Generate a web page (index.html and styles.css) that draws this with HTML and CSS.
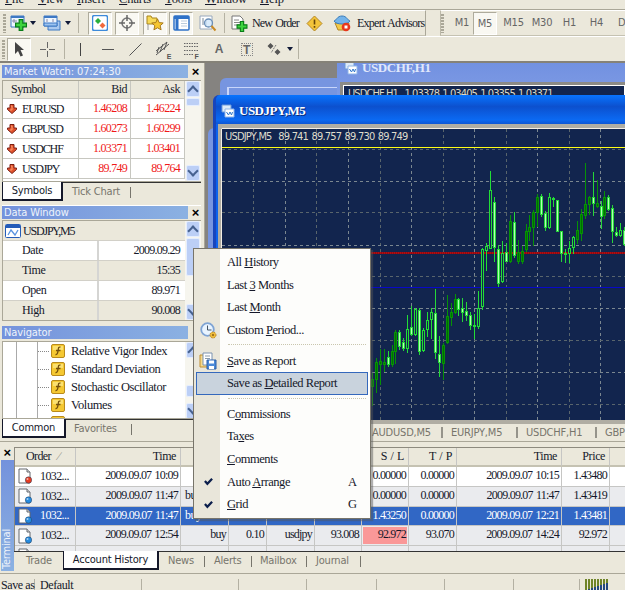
FILE: index.html
```html
<!DOCTYPE html>
<html lang="en">
<head>
<meta charset="utf-8">
<title>Trading terminal</title>
<link rel="stylesheet" href="styles.css">
</head>
<body>
<svg class="defs" width="0" height="0">
  <symbol id="plus" viewBox="0 0 10 10"><path d="M3.5.5h3v3h3v3h-3v3h-3v-3h-3v-3h3z" fill="#3fd43f" stroke="#087c18"/></symbol>
  <symbol id="down" viewBox="0 0 10 10"><path d="M3 .5h4V4h2.500v1.500L5 9.500.5 5.500V4H3z" fill="#e0512b" stroke="#7c2114"/><path d="M4 2h1v4H3" stroke="#ff9c70" fill="none"/></symbol>
  <symbol id="fx" viewBox="0 0 14 14"><rect x=".5" y=".5" width="13" height="13" rx="1.500" fill="#f5c832" stroke="#b98a1c"/><path d="M2 2h10v4H2z" fill="#fbe070"/><path d="M9.500 3.200C7.500 2.500 7.500 4 7.200 6S6.500 11 4.500 10.500M5 6.500h4.500" fill="none" stroke="#75500c" stroke-width="1.300"/></symbol>
  <symbol id="doc" viewBox="0 0 15 16"><path d="M1 1h8l3 3v11H1z" fill="#fff" stroke="#65696e"/><path d="M9 1v3h3" fill="#ddd" stroke="#65696e"/><circle cx="10.500" cy="12" r="3.200" fill="currentColor" stroke="#1e3c5c" stroke-width=".5"/><circle cx="9.500" cy="11" r="1" fill="#fff" opacity=".6"/></symbol>
  <symbol id="wins" viewBox="0 0 14 14"><path d="M1 1h9v7H1z" fill="#dcebfa" stroke="#6c9ad8"/><path d="M4 5h9v8H4z" fill="#fff" stroke="#8fb4e8"/><path d="M5.500 8l2 3 1.500-3 1.500 3 1-3" fill="none" stroke="#2e76cc"/></symbol>
  <symbol id="check" viewBox="0 0 8 8"><path d="M.8 3.500L3 6 7.200 1.500" fill="none" stroke="#0c1f4c" stroke-width="2"/></symbol>
</svg>

<div class="app">
  <nav class="menubar">
    <span><u>F</u>ile</span><span><u>V</u>iew</span><span><u>I</u>nsert</span><span><u>C</u>harts</span><span><u>T</u>ools</span><span><u>W</u>indow</span><span><u>H</u>elp</span>
  </nav>

  <div class="toolbar-row">
    <div class="toolbar standard">
      <i class="grip"></i>
      <span class="tool"><svg width="18" height="16"><path d="M1 1h13v11H1z" fill="#eef6ff" stroke="#3d78c4"/><path d="M1 2h13" stroke="#3d78c4" stroke-width="2"/><path d="M4 4v4M2 6h5" stroke="#88a"/><use href="#plus" x="5" y="4" width="12" height="12"/></svg></span>
      <i class="caret"></i>
      <span class="tool"><svg width="18" height="16"><path d="M5 6h12v9H5z" fill="#aac9ef" stroke="#3d78c4"/><path d="M1 1h13v10H1z" fill="#eef6ff" stroke="#3d78c4"/><path d="M1 2h13" stroke="#3d78c4" stroke-width="2"/><path d="M1 8h13v3H1z" fill="#9cc3ef" stroke="#3d78c4"/><path d="M4 4v3M10 4v3" stroke="#88a"/></svg></span>
      <i class="caret"></i>
      <i class="vsep"></i>
      <span class="tool pressed"><svg width="16" height="16"><rect x=".5" y=".5" width="15" height="15" rx="2" fill="#fff" stroke="#3d8ada" stroke-width="1.500"/><path d="M6 3l3 3-3 3-3-3z" fill="#29ae3c"/><path d="M10.500 7.500l3 3-3 3-3-3z" fill="#f06a3c"/></svg></span>
      <span class="tool pressed"><svg width="16" height="16"><circle cx="8" cy="8" r="5" fill="none" stroke="#777" stroke-width="1.500"/><path d="M8 0v6M8 10v6M0 8h6M10 8h6" stroke="#666" stroke-width="1.500"/></svg></span>
      <span class="tool pressed"><svg width="18" height="16"><path d="M1 1h4l1 2h5v6H1z" fill="#f7da58" stroke="#a8841d"/><path d="M2 9v6" stroke="#999"/><path d="M11.500 4l1.700 3.600 4 .4-3 2.700.9 4.100-3.600-2-3.600 2 .9-4.100-3-2.700 4-.4z" fill="#f6c62f" stroke="#a8781a"/></svg></span>
      <span class="tool pressed"><svg width="17" height="16"><rect x="1" y="1" width="15" height="14" rx="1" fill="#fff" stroke="#2f72c8" stroke-width="1.500"/><path d="M1 2.500h15M4 2v13" stroke="#2f72c8" stroke-width="3"/><path d="M8 6h6M8 8.500h6M8 11h6" stroke="#bcd"/></svg></span>
      <span class="tool"><svg width="18" height="17"><path d="M1 1h12v13H1z" fill="#fff" stroke="#98a8bc"/><path d="M4 3v7M7 5v7" stroke="#789"/><circle cx="9.500" cy="8" r="4" fill="#cfe6fa" fill-opacity=".8" stroke="#6b8fb8" stroke-width="1.300"/><path d="M12.500 11l4 4.500" stroke="#c98a25" stroke-width="2"/></svg></span>
      <i class="vsep"></i>
      <span class="tool"><svg width="17" height="17"><path d="M1 1h8l3 3v10H1z" fill="#fff" stroke="#777"/><path d="M3 5h5M3 7.500h7M3 10h5" stroke="#888"/><use href="#plus" x="5" y="6" width="12" height="11"/></svg></span>
      <span class="label order">New Order</span>
      <span class="tool"><svg width="17" height="17"><path d="M8.500 1l7.500 7.500L8.500 16 1 8.500z" fill="#f3c43a" stroke="#b48726" stroke-linejoin="round"/><path d="M8.500 4.500v5M8.500 11v1.800" stroke="#66460c" stroke-width="1.600"/></svg></span>
      <span class="tool"><svg width="18" height="17"><path d="M2 8l3 7h9l2-7z" fill="#f4ca48" stroke="#b48726"/><path d="M1 6c3-1 3-5 8-5s5 4 8 5c-2 4-14 4-16 0z" fill="#74b4ea" stroke="#3a7cba"/><circle cx="13" cy="12" r="4.300" fill="#e6381c"/><path d="M11.500 10.500h3v3h-3z" fill="#fff"/></svg></span>
      <span class="label">Expert Advisors</span>
    </div>
    <div class="toolbar periods">
      <i class="grip"></i><span>M1</span><span class="pressed">M5</span><span>M15</span><span>M30</span><span>H1</span><span>H4</span><span>D1</span>
    </div>
  </div>

  <div class="toolbar drawing">
    <i class="grip"></i>
    <span class="tool pressed"><svg width="12" height="15"><path d="M2 0v12l3-3 2.500 5.500L10 13.500 7.500 8H11z" fill="#444"/></svg></span>
    <span class="tool"><svg width="15" height="15"><path d="M7.500 0v6M7.500 9v6M0 7.500h6M9 7.500h6" stroke="#666"/></svg></span>
    <i class="vsep"></i>
    <span class="tool"><svg width="3" height="13"><path d="M1.500 0v13" stroke="#444"/></svg></span>
    <span class="tool"><svg width="12" height="3"><path d="M0 1.500h12" stroke="#555"/></svg></span>
    <span class="tool"><svg width="13" height="13"><path d="M.5 12.500l12-12" stroke="#555"/></svg></span>
    <span class="tool"><svg width="16" height="17"><path d="M1 10L12 1M1 14L14 3M4 6l-2 6M8 3L5 11M12 1L9 9" stroke="#555" fill="none"/></svg><sub>E</sub></span>
    <span class="tool"><svg width="15" height="16"><path d="M0 2.500h14M0 5.500h14M0 9.500h14M0 13.500h9" stroke="#666" stroke-dasharray="1.500 1"/></svg><sub>F</sub></span>
    <span class="tool letter">A</span>
    <span class="tool letter"><b>T</b></span>
    <span class="tool"><svg width="14" height="14"><path d="M3.500 1L6.500 4 3.500 7 .5 4zM10.500 7L13.500 10 10.500 13 7.500 10z" fill="#555"/><path d="M9 3L4 11" stroke="#777" stroke-dasharray="2 1"/></svg></span>
    <i class="caret"></i>
    <i class="vsep"></i>
  </div>

  <main class="workspace">
    <aside class="docks">
      <section class="dock market">
        <header class="caption"><h2>Market Watch: 07:24:30</h2><span class="close">×</span></header>
        <div class="scroll">
          <div class="quotes">
            <div class="row head"><span>Symbol</span><span>Bid</span><span>Ask</span></div>
            <div class="row"><span><svg width="10" height="10"><use href="#down"/></svg>EURUSD</span><span>1.46208</span><span>1.46224</span></div>
            <div class="row"><span><svg width="10" height="10"><use href="#down"/></svg>GBPUSD</span><span>1.60273</span><span>1.60299</span></div>
            <div class="row"><span><svg width="10" height="10"><use href="#down"/></svg>USDCHF</span><span>1.03371</span><span>1.03401</span></div>
            <div class="row"><span><svg width="10" height="10"><use href="#down"/></svg>USDJPY</span><span>89.749</span><span>89.764</span></div>
          </div>
          <div class="bar"><i class="up"></i><i class="thumb"></i><i class="dn"></i></div>
        </div>
        <div class="tabs"><span class="on">Symbols</span><span>Tick Chart</span></div>
      </section>

      <section class="dock data">
        <header class="caption"><h2>Data Window</h2><span class="close">×</span></header>
        <div class="scroll">
          <div class="facts">
            <div class="chartname"><svg width="16" height="14"><rect x=".5" y=".5" width="15" height="13" rx="1" fill="#fff" stroke="#245cb8"/><path d="M1 2.500h14" stroke="#245cb8" stroke-width="3"/><path d="M3 11l3-5 4 5 3-5" fill="none" stroke="#5a94e0" stroke-width="1.300"/></svg>USDJPY,M5</div>
            <div class="row lit"><span>Date</span><span>2009.09.29</span></div>
            <div class="row"><span>Time</span><span>15:35</span></div>
            <div class="row lit"><span>Open</span><span>89.971</span></div>
            <div class="row"><span>High</span><span>90.008</span></div>
          </div>
          <div class="bar"><i class="up"></i><i class="thumb"></i><i class="dn"></i></div>
        </div>
      </section>

      <section class="dock navigator">
        <header class="caption"><h2>Navigator</h2></header>
        <div class="scroll">
          <div class="tree">
            <div><svg width="14" height="14"><use href="#fx"/></svg>Relative Vigor Index</div>
            <div><svg width="14" height="14"><use href="#fx"/></svg>Standard Deviation</div>
            <div><svg width="14" height="14"><use href="#fx"/></svg>Stochastic Oscillator</div>
            <div><svg width="14" height="14"><use href="#fx"/></svg>Volumes</div>
            <div><svg width="14" height="14"><use href="#fx"/></svg>Williams' Percent R</div>
          </div>
          <div class="bar"><i class="up"></i><i class="thumb"></i><i class="dn"></i></div>
        </div>
        <div class="tabs"><span class="on">Common</span><span>Favorites</span></div>
      </section>
    </aside>

    <section class="mdi">
      <div class="desktop">
        <div class="window rear"><i></i></div>
        <div class="window side"></div>
        <div class="window chf">
          <h3><svg width="14" height="14"><use href="#wins"/></svg>USDCHF,H1</h3>
          <p>USDCHF,H1&nbsp; 1.03378 1.03405 1.03355 1.03371</p>
        </div>
        <div class="window jpy">
          <h3><svg width="14" height="14"><use href="#wins"/></svg>USDJPY,M5</h3>
          <div class="client">
            <p>USDJPY,M5&nbsp; 89.741 89.757 89.730 89.749</p>
            <svg id="chart" width="404" height="292" viewBox="221 128 404 292"></svg>
          </div>
        </div>
      </div>
      <div class="charttabs"><span>AUDUSD,M5</span><span>EURJPY,M5</span><span>USDCHF,H1</span><span>GBP</span></div>
    </section>
  </main>

  <section class="terminal">
    <div class="strip"><span class="close">×</span><h2>Terminal</h2></div>
    <div class="body">
      <div class="orders">
        <div class="row head"><span>Order<em>∕</em></span><span>Time</span><span></span><span></span><span></span><span></span><span>S / L</span><span>T / P</span><span>Time</span><span>Price</span><span></span></div>
        <div class="row"><span><svg class="red" width="15" height="16"><use href="#doc"/></svg>1032...</span><span>2009.09.07 10:09</span><span></span><span></span><span></span><span></span><span>0.00000</span><span>0.00000</span><span>2009.09.07 10:15</span><span>1.43480</span><span></span></div>
        <div class="row alt"><span><svg width="15" height="16"><use href="#doc"/></svg>1032...</span><span>2009.09.07 11:47</span><span class="wide">buy limit</span><span></span><span></span><span></span><span>0.00000</span><span>0.00000</span><span>2009.09.07 11:47</span><span>1.43419</span><span></span></div>
        <div class="row selected"><span><svg width="15" height="16"><use href="#doc"/></svg>1032...</span><span>2009.09.07 11:47</span><span class="wide">buy limit</span><span></span><span></span><span></span><span>1.43250</span><span>0.00000</span><span>2009.09.07 12:21</span><span>1.43481</span><span></span></div>
        <div class="row alt"><span><svg width="15" height="16"><use href="#doc"/></svg>1032...</span><span>2009.09.07 12:54</span><span>buy</span><span>0.10</span><span>usdjpy</span><span>93.008</span><span class="hit">92.972</span><span>93.070</span><span>2009.09.07 14:24</span><span>92.972</span><span></span></div>
        <div class="row alt"><span><svg width="15" height="16"><use href="#doc"/></svg></span><span></span><span></span><span></span><span></span><span></span><span></span><span></span><span></span><span></span><span></span></div>
      </div>
      <div class="tabs"><span>Trade</span><span class="on">Account History</span><span>News</span><span>Alerts</span><span>Mailbox</span><span>Journal</span></div>
    </div>
  </section>

  <footer class="status">
    <span>Save as</span><span>Default</span><span></span><span></span><span></span><span></span><span></span><span></span><span></span>
    <span><svg width="24" height="12"><path d="M1 0v11M4 0v10M7 0v9M10 0v8M13 0v7M16 0v6M19 0v5M22 0v4" stroke="#6f8428" stroke-width="2"/><path d="M4 12v-2M7 12V9M10 12V8M13 12V7M16 12V6M19 12V5M22 12V4" stroke="#244880" stroke-width="2"/></svg></span>
  </footer>
</div>

<div class="popup">
  <div class="item"><span>All <u>H</u>istory</span></div>
  <div class="item"><span>Last <u>3</u> Months</span></div>
  <div class="item"><span>Last <u>M</u>onth</span></div>
  <div class="item"><i><svg width="17" height="17"><circle cx="7.500" cy="7.500" r="6.300" fill="#e9f4ff" stroke="#7fa4d4" stroke-width="1.800"/><path d="M7.500 3.500v4.500h4" fill="none" stroke="#456" /><circle cx="13" cy="13" r="3" fill="#efbc3a" stroke="#b98420" stroke-dasharray="1.500 1"/><circle cx="13" cy="13" r="1" fill="#8a5f14"/></svg></i><span>Custom <u>P</u>eriod...</span></div>
  <hr>
  <div class="item"><i><svg width="18" height="18"><path d="M1 3h10v12H1z" fill="#f5d98a" stroke="#c08e30"/><path d="M4 1h9v12H4z" fill="#fff" stroke="#7a92b0"/><path d="M6 4h5M6 6.500h5" stroke="#89a"/><path d="M8 8h9v9H8z" fill="#4b8ad8" stroke="#2a5fa8"/><path d="M10 8.500h5v3h-5zM10 14h5v3h-5z" fill="#fff"/></svg></i><span><u>S</u>ave as Report</span></div>
  <div class="item hot"><span>Save as <u>D</u>etailed Report</span></div>
  <hr>
  <div class="item"><span>C<u>o</u>mmissions</span></div>
  <div class="item"><span>Ta<u>x</u>es</span></div>
  <div class="item"><span><u>C</u>omments</span></div>
  <div class="item"><i><svg width="9" height="9"><use href="#check"/></svg></i><span>Auto <u>A</u>rrange</span><kbd>A</kbd></div>
  <div class="item"><i><svg width="9" height="9"><use href="#check"/></svg></i><span><u>G</u>rid</span><kbd>G</kbd></div>
</div>
<script src="chart.js"></script>
</body>
</html>
```
FILE: chart.js
```js
// Candle: [x, high, low, body top, body bottom, kind]
// kind: d = dark bullish, f = filled pale, h = hollow. Units are thirds of a pixel.
const candles = [
  [21,700,797,718,740,'d'],[33,655,757,668,718,'d'],[45,627,732,665,674,'d'],[57,628,694,667,674,'d'],
  [69,634,680,651,674,'f'],[81,615,680,634,674,'d'],[92,570,670,577,634,'d'],[103,570,628,577,618,'f'],
  [115,594,631,606,626,'f'],[127,527,637,567,624,'h'],[139,500,585,561,582,'f'],[151,504,586,508,582,'h'],
  [163,504,644,511,635,'f'],[175,564,633,571,631,'h'],[187,518,590,541,568,'h'],[199,506,594,517,538,'h'],
  [211,448,656,521,638,'f'],[223,590,708,643,666,'f'],[235,611,718,615,670,'d'],[247,465,611,529,607,'d'],
  [258,491,556,516,532,'d'],[270,462,520,478,516,'d'],[281,476,526,478,508,'f'],[293,476,543,504,516,'f'],
  [305,488,540,515,527,'f'],[316,516,568,527,556,'f'],[328,522,594,555,556,'h'],[340,453,566,504,558,'h'],
  [352,324,508,328,500,'h'],[364,311,390,318,330,'h'],[376,95,326,152,325,'h'],[388,172,364,187,321,'f'],
  [400,315,440,327,429,'f'],[412,303,428,340,424,'h'],[424,310,364,338,364,'f'],[436,225,366,244,364,'d'],
  [447,216,352,246,346,'f'],[459,300,371,338,364,'d'],[471,318,369,335,365,'d'],[483,252,334,275,327,'d'],
  [494,225,302,263,275,'d'],[506,210,317,217,263,'d'],[518,164,260,173,218,'d'],[530,164,228,170,224,'f'],
  [542,214,272,219,263,'f'],[554,160,264,173,263,'h'],[566,172,200,174,176,'h'],[577,180,275,182,275,'f'],
  [589,273,364,275,340,'f'],[601,329,367,340,343,'f'],[613,303,368,326,341,'h'],[625,290,341,293,322,'h'],
  [637,243,310,272,297,'d'],[649,208,302,224,280,'d'],[661,70,236,194,226,'d'],[672,168,223,171,194,'d'],
  [684,97,227,172,189,'f'],[696,120,203,190,198,'d'],[708,183,264,199,229,'f'],[719,154,234,171,226,'d'],
  [731,167,210,171,208,'f'],[743,195,308,206,274,'f'],[755,262,288,276,287,'f'],[767,249,290,271,285,'h'],
  [779,262,316,272,313,'f']
];
const gridX = [253, 285, 316, 348, 380, 411, 443, 474, 506, 537, 569, 600];
const gridY = [149, 181, 212, 245, 276, 308, 340, 372, 404];
const px = (v, o) => Math.round(v / 3 - 0.5) + o;
let out = '';
gridX.forEach((x, i) => out += `<path class="grid${i % 2}" d="M${x}.5 129V420"/>`);
gridY.forEach((y, i) => out += `<path class="grid${i % 2}" d="M222 ${y}.5H625"/>`);
out += '<path class="hi" d="M222 147.500H625"/><path class="ask" d="M222 253H625"/><path class="bid" d="M222 253H625"/><path class="lo" d="M222 287.500H625"/>';
for (const [x, h, l, t, b, k] of candles) {
  const cx = px(x, 365), top = px(t, 140), hgt = Math.max(1, px(b, 140) - top);
  out += `<path class="${k}" d="M${cx}.5 ${px(h, 140)}V${top}M${cx}.5 ${top + hgt}V${px(l, 140) + 1}"/>`;
  out += `<rect class="${k}" x="${cx - 0.5}" y="${top + 0.5}" width="2" height="${hgt}"/>`;
}
out += '<path class="frame" d="M625 128.500H221.500V420.500H625"/>';
document.getElementById('chart').innerHTML = out;
```
FILE: styles.css
```css
* { box-sizing: border-box; }
body { margin: 0; width: 625px; height: 590px; overflow: hidden; position: relative; background: #ebe8db; color: #15182a; font: 12px/20px "Liberation Serif", serif; letter-spacing: -.4px; white-space: nowrap; }
h2, h3, p { margin: 0; font-weight: normal; }
svg { flex: none; display: block; }
.defs { position: absolute; }
.app { width: 625px; height: 590px; display: flex; flex-direction: column; overflow: hidden; }

.menubar { height: 10px; flex: none; display: grid; grid-template-columns: 33px 39px 42px 46px 40px 55px 50px; padding-left: 5px; border-bottom: 1px solid #aaa798; overflow: hidden; }
.menubar span { line-height: 14px; margin-top: -8px; font-size: 12.500px; letter-spacing: -.1px; }
.toolbar-row { height: 26px; flex: none; display: flex; gap: 14px; }
.toolbar { display: grid; align-items: center; border-bottom: 1px solid #c5c2b2; border-top: 1px solid #fff; }
.standard { width: 426px; grid-template-columns: 9px 20px 8px 29px 4px 17px 26px 28px 27px 26px 27px 7px 22px 52px 25px 30px 69px; border-right: 1px solid #aaa798; }
.standard > * { justify-self: center; }
.standard .label { justify-self: start; letter-spacing: -.75px; word-spacing: 1px; }
.standard .order { padding-left: 2px; letter-spacing: -.85px; }
.periods { flex: 1; min-width: 0; overflow: hidden; grid-template-columns: 10px 22px 26px 29px 28px 27px 27px 15px; border-left: 1px solid #bbb8a8; color: #666; font: 11px/22px "DejaVu Sans Condensed", "DejaVu Sans", sans-serif; font-stretch: condensed; letter-spacing: -.2px; text-align: center; }
.periods span:last-child { overflow: hidden; text-align: left; padding-left: 8px; }
.drawing { height: 27px; flex: none; grid-template-columns: 7px 24px 32px 3px 28px 28px 27px 28px 28px 28px 27px 28px 4px 12px; border-bottom: 2px solid #858278; }
.drawing > * { justify-self: center; }
.tool { display: flex; align-items: center; justify-content: center; height: 22px; }
.tool sub { font: 700 7px/7px "Liberation Sans", sans-serif; align-self: end; margin-left: -4px; color: #555; }
.pressed { width: 24px; height: 23px; background: #f9f8f2; border: 1px solid #aeab9c; border-right-color: #fff; border-bottom-color: #fff; }
.letter { font: 700 12px "Liberation Sans", sans-serif; color: #666; }
.letter b { border: 1px dotted #888; width: 12px; height: 13px; line-height: 12px; text-align: center; }
.grip { width: 3px; height: 19px; background: repeating-linear-gradient(#aaa798 0 2px, transparent 2px 3px); }
.vsep { width: 1px; height: 20px; background: #b5b2a3; }
.caret { border: 3px solid transparent; border-top: 4px solid #111a38; border-bottom: 0; }

.workspace { flex: none; height: 378px; display: grid; grid-template-columns: 205px 1fr; }
.docks { display: flex; flex-direction: column; padding: 2px 3px 0 2px; border-right: 1px solid #aaa798; gap: 4px; }
.dock { display: flex; flex-direction: column; flex: none; }
.caption { height: 14px; display: flex; justify-content: space-between; }
.caption h2 { width: 186px; height: 13px; background: linear-gradient(90deg, #7492dc, #8bb1e2); color: #eef3fb; font: 11px/13px "DejaVu Sans Condensed", "DejaVu Sans", sans-serif; font-stretch: condensed; letter-spacing: -.1px; padding-left: 2px; }
.close { font: 700 13px/13px "Liberation Sans", sans-serif; color: #000; padding-right: 2px; }
.scroll { display: grid; grid-template-columns: 1fr 16px; border: 1px solid #aaa798; border-right: 0; overflow: hidden; }
.bar { display: flex; flex-direction: column; background: #f6f5ee; gap: 1px; align-items: center; }
.bar i { width: 14px; background: #bccff6; border: 1px solid #e6eefe; border-radius: 2px; }
.up, .dn { height: 16px; display: grid; place-items: center; flex: none; }
.dn { margin-top: auto; }
.up::before, .dn::before { content: ""; width: 6px; height: 6px; border: solid #46618f; border-width: 2px 0 0 2px; transform: translateY(2px) rotate(45deg); }
.dn::before { transform: translateY(-2px) rotate(225deg); }
.thumb { height: 8px; }
.tabs { display: flex; height: 19px; border-top: 1px solid #333; font: 11px/18px "DejaVu Sans Condensed", "DejaVu Sans", sans-serif; font-stretch: condensed; letter-spacing: -.2px; color: #77756c; }
.tabs span { display: flex; align-items: center; }
.tabs .on { background: #fff; color: #15182a; border: solid #15182a; border-width: 0 2px 2px 1px; margin-top: -1px; justify-content: center; }
.tabs span:not(.on)::after { content: ""; width: 1px; height: 11px; background: #77756c; margin-left: auto; }

.market { height: 136px; }
.market .scroll { height: 102px; margin-top: 1px; }
.quotes { background: #fff; }
.quotes .row { height: 20px; display: grid; grid-template-columns: 76px 52px 54px; border-bottom: 1px solid #c7c7c0; line-height: 18px; }
.quotes .row span { text-align: right; padding-right: 3px; border-right: 1px solid #c7c7c0; color: #f01818; letter-spacing: -.72px; }
.quotes .row span:last-child { padding-right: 4px; }
.quotes .row span:first-child { display: flex; align-items: center; gap: 5px; padding-left: 4px; color: #15182a; letter-spacing: -1.100px; }
.quotes .row.head { height: 18px; line-height: 17px; }
.quotes .head span, .quotes .head span:first-child { background: #ebe8db; color: #15182a; letter-spacing: -.5px; }
.quotes .head span:first-child { padding-left: 8px; }
.market .on { width: 61px; }
.market .tabs span:last-child { width: 68px; padding-left: 9px; }

.data { height: 117px; border-top: 1px solid #fff; }
.data .scroll { height: 101px; }
.chartname { height: 19px; display: flex; align-items: center; gap: 2px; padding-left: 2px; letter-spacing: -1.200px; }
.facts .row { height: 20px; display: grid; grid-template-columns: 96px 1fr; border-top: 1px solid #d2d0c8; line-height: 18px; }
.facts .row span:first-child { padding-left: 19px; border-right: 2px solid #d5d5d3; }
.facts .row span:last-child { text-align: right; padding-right: 5px; letter-spacing: -.75px; }
.facts .lit { background: #fff; }
.data .thumb { height: 38px; }

.navigator .scroll { height: 78px; margin-top: 1px; background: #fff; }
.navigator .thumb { height: 12px; margin-top: 26px; }
.tree { background: linear-gradient(#aaa, #aaa) 13px 0 / 1px 100% no-repeat, linear-gradient(#aaa, #aaa) 34px 0 / 1px 100% no-repeat; overflow: hidden; height: 77px; }
.tree div { display: flex; align-items: center; height: 18px; gap: 6px; font-size: 12.500px; letter-spacing: -.42px; }
.tree div::before { content: ""; flex: none; width: 11px; margin: 0 -4px 0 35px; border-top: 1px dotted #888; }
.navigator .on { width: 64px; }
.navigator .tabs span:last-child { width: 66px; padding-left: 8px; }

.mdi { display: flex; flex-direction: column; min-width: 0; overflow: hidden; }
.desktop { height: 361px; position: relative; overflow: hidden; background: #858380; }
.window { position: absolute; border-radius: 6px 0 0 0; background: #7795e0; }
.rear { left: 15px; top: 15px; width: 130px; height: 40px; }
.rear i { display: block; margin: 9px 0 0 7px; height: 10px; border: solid #c8d6fb; border-width: 1px 0 0 2px; }
.side { left: 3px; top: 65px; width: 10px; height: 300px; }
.chf { left: 132px; top: -10px; width: 288px; height: 60px; background: linear-gradient(#6e8ee0, #85a0e6); }
.window h3 { display: flex; align-items: center; font: 700 13px/20px "Liberation Serif", serif; letter-spacing: -.4px; color: #fff; gap: 4px; }
.chf h3 { height: 27px; padding: 2px 0 0 7px; }
.window.chf h3 { color: #e0e8fb; }
.chf p { margin: 5px 0 0 6px; background: #12254e; border: 1px solid #fff; box-shadow: 0 0 0 3px #8c8b86; height: 30px; padding-left: 4px; color: #dedbc8; font: 11px/16px "DejaVu Sans Condensed", "DejaVu Sans", sans-serif; font-stretch: condensed; letter-spacing: -.9px; word-spacing: 1px; }
.jpy { left: 8px; top: 32px; width: 412px; height: 329px; background: #0d63ec; border-left: 3px solid #1845bc; }
.jpy h3 { height: 29px; padding: 3px 0 0 5px; background: linear-gradient(#0874ff, #0c50ce 40%, #0b69f2 85%, #0d56d4); border-radius: 5px 0 0 0; gap: 4px; text-shadow: 1px 1px #0c2c78; letter-spacing: -.5px; }
.client { position: relative; margin-left: 2px; padding: 4px 0 0 3px; background: #b0ada3; height: 300px; overflow: hidden; }
.client p { position: absolute; left: 7px; top: 6px; color: #dfdccb; font: 11px/14px "DejaVu Sans Condensed", "DejaVu Sans", sans-serif; font-stretch: condensed; letter-spacing: -.8px; word-spacing: 1px; }
#chart { background: #12254e; fill: none; }
#chart .grid0 { stroke: #59656c; stroke-dasharray: 3 3; }
#chart .grid1 { stroke: #7b8790; stroke-dasharray: 3 3; }
#chart .hi { stroke: #ffff18; }
#chart .ask { stroke: #8f0810; stroke-width: 2; }
#chart .bid { stroke: #c91515; stroke-dasharray: 1 1; }
#chart .lo { stroke: #0808c8; }
#chart .frame { stroke: #f3eee4; }
#chart .d { stroke: #069206; fill: #007000; }
#chart .f { stroke: #25d738; fill: #b3ffb3; }
#chart .h { stroke: #22dd36; fill: #12254e; }
.charttabs { height: 17px; display: grid; grid-template-columns: 71px 75px 79px 28px; padding-left: 167px; color: #77756c; font: 11px/15px "DejaVu Sans Condensed", "DejaVu Sans", sans-serif; font-stretch: condensed; letter-spacing: -.2px; }
.charttabs span { display: flex; align-items: center; padding-bottom: 1px; }
.charttabs span:not(:last-child)::after { content: ""; width: 2px; height: 11px; background: #96948b; margin-left: auto; }
.charttabs span + span { padding-left: 8px; }

.terminal { flex: none; height: 133px; display: grid; grid-template-columns: 14px 1fr; padding-top: 5px; border-top: 1px solid #aaa798; border-bottom: 1px solid #aaa798; }
.body { min-width: 0; }
.strip { display: flex; flex-direction: column; align-items: center; }
.strip .close { padding: 0; height: 13px; line-height: 11px; }
.strip h2 { width: 13px; height: 111px; background: linear-gradient(#8bb1e2, #7492dc); color: #eef3fb; writing-mode: vertical-rl; transform: rotate(180deg); font: 11px/12px "DejaVu Sans Condensed", "DejaVu Sans", sans-serif; font-stretch: condensed; letter-spacing: -.2px; padding-top: 2px; }
.orders { height: 104px; overflow: hidden; border: 1px solid #8d8a7e; border-right: 0; border-bottom: 0; }
.orders .row { display: grid; grid-template-columns: 61px 105px 48px 38px 48px 47px 47px 48px 105px 48px 16px; height: 19.800px; background: #fff; line-height: 17px; }
.orders .row span { text-align: right; padding-right: 2px; border: solid #c6c6c4; border-width: 0 1px 1px 0; letter-spacing: -.78px; word-spacing: 1px; }
.orders .row span:first-child { display: flex; align-items: center; gap: 7px; padding-left: 3px; letter-spacing: -.6px; }
.orders .row .wide { letter-spacing: -.4px; }
.orders svg { color: #258be0; }
.orders .red { color: #ea3c20; }
.orders .row.head { height: 19px; }
.orders .head span, .orders .head span:first-child { background: #ebe8db; letter-spacing: -.4px; padding-right: 4px; border-bottom: 2px solid #c5c2b2; }
.orders .head span:first-child { padding-left: 11px; letter-spacing: -.6px; }
.orders .head em { color: #8d8a7e; font-style: normal; }
.orders .alt { background: #eaebee; }
.orders .selected { background: #3167c5; color: #fff; }
.orders .hit { background: #fa9898; box-shadow: inset 0 0 0 1px #eaebee; }
.terminal .tabs span:nth-child(1) { width: 49px; padding-left: 12px; }
.terminal .tabs .on { width: 96px; }
.terminal .tabs span:nth-child(1)::after { display: none; }
.terminal .tabs span:nth-child(3) { width: 46px; padding-left: 9px; }
.terminal .tabs span:nth-child(4) { width: 47px; padding-left: 9px; }
.terminal .tabs span:nth-child(5) { width: 55px; padding-left: 8px; }
.terminal .tabs span:nth-child(6) { width: 54px; padding-left: 9px; }

.status { flex: 1; display: grid; grid-template-columns: 35px 107px 97px 68px 70px 68px 69px 66px 4px 1fr; padding-top: 5px; overflow: hidden; }
.status span { border-right: 1px solid #b3b0a2; height: 12px; line-height: 13px; padding-left: 1px; }
.status span:nth-child(2) { padding-left: 5px; }
.status span:nth-child(9), .status span:last-child { border: 0; }

.popup { position: absolute; left: 193px; top: 248px; width: 178px; height: 271px; border: 1px solid #77746a; box-shadow: 2px 2px 1px #5557; background: linear-gradient(90deg, #e9e6da 26px, #fdfdfb 26px); padding: 2px; }
.item { height: 22.600px; display: grid; grid-template-columns: 24px 1fr 20px; align-items: center; font-size: 12.500px; letter-spacing: -.45px; }
.item i { grid-column: 1; justify-self: center; }
.item span { grid-column: 2; padding-left: 7px; }
.item kbd { font: inherit; }
.hot { background: #c9d3dd; outline: 1px solid #3468bc; outline-offset: -1px; }
.popup hr { border: 0; border-top: 1px dotted #c9c6ae; margin: 3px 2px 4px 32px; }
```
